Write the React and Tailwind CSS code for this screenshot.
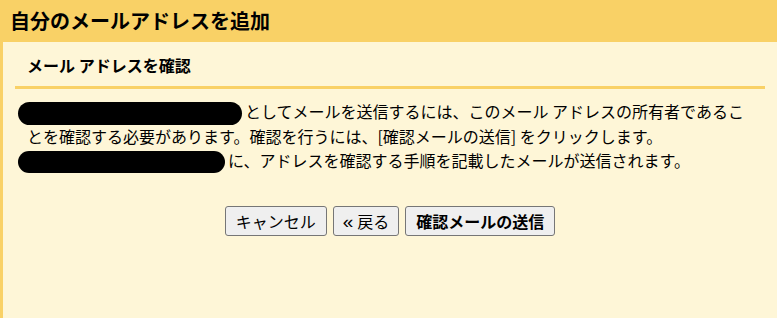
export default function App() {
  const font = { fontFamily: '"Noto Sans CJK JP", "Noto Sans", sans-serif' };
  return (
    <div className="w-[777px] h-[318px] flex flex-col bg-[#fef6d7] text-black overflow-hidden" style={font}>
      <div className="h-[42px] shrink-0 bg-[#f9d166] flex items-center pl-[10px]">
        <h1 className="text-[20px] font-bold leading-none">自分のメールアドレスを追加</h1>
      </div>
      <div className="flex-1 border-l-[3px] border-[#f9d166]">
        <div className="mx-[12px]">
          <div className="h-[47px] border-b-[3px] border-[#f9d166] flex items-center px-[12px] pt-[1px]">
            <h2 className="text-[16px] font-bold leading-none">メール アドレスを確認</h2>
          </div>
          <div className="px-[12px] pt-[11px] text-[16px] leading-[23.5px]">
            <p>
              <span className="inline-block align-middle -ml-[9px] mr-[3px] w-[224px] h-[23px] rounded-full bg-black"></span>
              としてメールを送信するには、このメール アドレスの所有者であることを確認する必要があります。確認を行うには、[確認メールの送信] をクリックします。
              <br />
              <span className="inline-block align-middle -ml-[9px] mr-[3px] w-[207px] h-[22px] rounded-full bg-black"></span>
              に、アドレスを確認する手順を記載したメールが送信されます。
            </p>
          </div>
          <div className="flex justify-center gap-[6px] mt-[33px]">
            <button className="h-[30px] px-[10px] border border-[#767676] rounded-[3px] bg-[#efefef] text-[16px] leading-none">キャンセル</button>
            <button className="h-[30px] px-[9px] border border-[#767676] rounded-[3px] bg-[#efefef] text-[16px] leading-none flex items-center">
              <span className="text-[19px] leading-none" style={{ fontFamily: '"Liberation Sans", sans-serif' }}>«</span>
              <span className="ml-[4px]">戻る</span>
            </button>
            <button className="h-[30px] px-[10px] border border-[#767676] rounded-[3px] bg-[#efefef] text-[16px] font-bold leading-none">確認メールの送信</button>
          </div>
        </div>
      </div>
    </div>
  );
}
